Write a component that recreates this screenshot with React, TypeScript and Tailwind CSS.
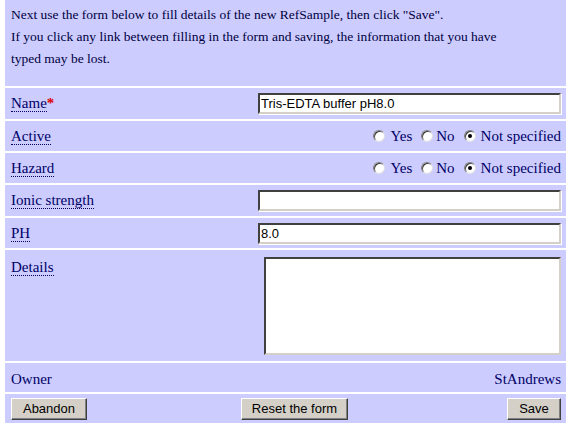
import React from "react";

const serif = "[font-family:'Liberation_Serif','Times_New_Roman',serif]";
const sans = "[font-family:'Liberation_Sans',Arial,sans-serif]";

function Label({ children }: { children: React.ReactNode }) {
  return (
    <span className="border-b border-dotted border-[#000066] leading-[16px]">{children}</span>
  );
}

function Radio({ checked }: { checked?: boolean }) {
  return (
    <span className="relative inline-flex items-center justify-center w-[12px] h-[12px] rounded-full bg-white border border-t-[#808080] border-l-[#808080] border-b-[#e0e0e0] border-r-[#e0e0e0] shadow-[inset_1px_1px_0_#404040]">
      {checked && <span className="w-[4px] h-[4px] rounded-full bg-black" />}
    </span>
  );
}

function RadioGroup() {
  return (
    <div className="flex items-center gap-[9px] pr-[5px]">
      <span className="flex items-center gap-[5px]"><Radio /><span>Yes</span></span>
      <span className="flex items-center gap-[3px]"><Radio /><span>No</span></span>
      <span className="flex items-center gap-[5px]"><Radio checked /><span>Not specified</span></span>
    </div>
  );
}

function TextInput({ value }: { value?: string }) {
  return (
    <div
      className={`w-[303px] h-[21px] bg-white border-2 border-t-[#404040] border-l-[#404040] border-b-[#d4d0c8] border-r-[#d4d0c8] shadow-[1px_1px_0_#ffffff] ${sans} text-[13px] text-black leading-[17px] px-[1px] flex items-center`}
    >
      {value}
    </div>
  );
}

function Button({ children, w }: { children: React.ReactNode; w: string }) {
  return (
    <div
      className={`${w} h-[22px] bg-[#d4d0c8] border border-t-white border-l-white border-b-[#404040] border-r-[#404040] shadow-[inset_-1px_-1px_0_#808080] ${sans} text-[13px] text-black flex items-center justify-center`}
    >
      {children}
    </div>
  );
}

export default function App() {
  return (
    <div className={`w-[571px] h-[429px] bg-white ${serif} text-[15px] text-[#000066]`}>
      <div className="ml-[5px] w-[561px] flex flex-col gap-[2px] bg-white">
        <div className="h-[86px] bg-[#ccccff] pl-[6px] pr-[60px] pt-[4px] leading-[22px] text-[13.5px] text-[#000040]">
          Next use the form below to fill details of the new RefSample, then click "Save".
          <br />
          If you click any link between filling in the form and saving, the information that you have typed may be lost.
        </div>

        <div className="h-[31px] bg-[#ccccff] flex items-center justify-between pl-[6px] pr-[5px]">
          <span>
            <Label>Name</Label>
            <span className="text-[#dd0000] font-bold">*</span>
          </span>
          <TextInput value="Tris-EDTA buffer pH8.0" />
        </div>

        <div className="h-[30px] bg-[#ccccff] flex items-center justify-between pl-[6px]">
          <Label>Active</Label>
          <RadioGroup />
        </div>

        <div className="h-[30px] bg-[#ccccff] flex items-center justify-between pl-[6px]">
          <Label>Hazard</Label>
          <RadioGroup />
        </div>

        <div className="h-[31px] bg-[#ccccff] flex items-center justify-between pl-[6px] pr-[5px]">
          <Label>Ionic strength</Label>
          <TextInput />
        </div>

        <div className="h-[30px] bg-[#ccccff] flex items-center justify-between pl-[6px] pr-[5px]">
          <Label>PH</Label>
          <TextInput value="8.0" />
        </div>

        <div className="h-[111px] bg-[#ccccff] flex justify-between pl-[6px] pr-[5px]">
          <div className="pt-[6px]">
            <Label>Details</Label>
          </div>
          <div className="pt-[7px]">
            <div className="w-[297px] h-[98px] bg-white border-2 border-t-[#404040] border-l-[#404040] border-b-[#d4d0c8] border-r-[#d4d0c8]" />
          </div>
        </div>

        <div className="h-[29px] bg-[#ccccff] flex items-center justify-between pl-[6px] pr-[5px] pt-[3px]">
          <span>Owner</span>
          <span>StAndrews</span>
        </div>

        <div className="h-[29px] bg-[#ccccff] flex items-center pl-[6px] pr-[5px]">
          <Button w="w-[76px]">Abandon</Button>
          <div className="ml-[154px]">
            <Button w="w-[107px]">Reset the form</Button>
          </div>
          <div className="ml-auto">
            <Button w="w-[54px]">Save</Button>
          </div>
        </div>
      </div>
    </div>
  );
}
